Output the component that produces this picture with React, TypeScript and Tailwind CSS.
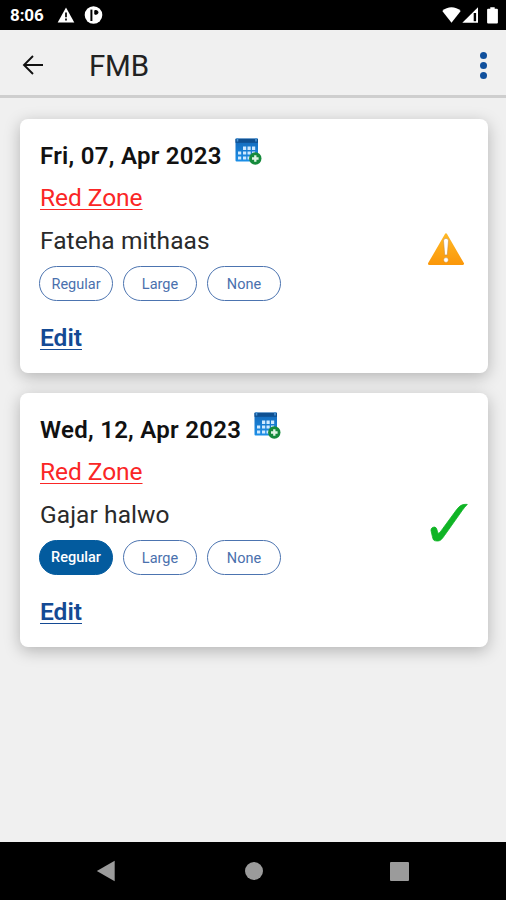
import React from 'react';
import clsx from 'clsx';

type Meal = {
    date: string;
    zone: string;
    dish: string;
    selected?: string;
    confirmed: boolean;
};

const meals: Meal[] = [
    {
        date: "Fri, 07, Apr 2023",
        zone: "Red Zone",
        dish: "Fateha mithaas",
        confirmed: false,
    },
    {
        date: "Wed, 12, Apr 2023",
        zone: "Red Zone",
        dish: "Gajar halwo",
        selected: "Regular",
        confirmed: true,
    },
];

const sizes = ["Regular", "Large", "None"];

function CalendarIcon() {
    return (
        <svg width="27" height="28" viewBox="0 0 27 28">
            <defs>
                <linearGradient id="calendarBlue" x1="0" y1="0" x2="0" y2="1">
                    <stop offset="0" stopColor="#1468b8" />
                    <stop offset="1" stopColor="#1c8fe8" />
                </linearGradient>
            </defs>
            <rect x="0.5" y="0.5" width="22.5" height="23" rx="1" fill="url(#calendarBlue)" />
            <rect x="0.5" y="0.8" width="22.5" height="4" fill="#0f5091" />
            <path d="M2.5 0v3.5M21 0v3.5" stroke="#4a95d6" strokeWidth="1.6" />
            <path
                d="M8 8.5h3.2V12H8zM12.5 8.5h3.2V12h-3.2zM17 8.5h3.2V12H17zM3 13.5h3.2v3H3zM8 13.5h3.2v3H8zM12.5 13.5h3.2v3h-3.2zM17 13.5h3.2v3H17zM3 18.5h3.2v3H3zM8 18.5h3.2v3H8zM12.5 18.5h3.2v3h-3.2z"
                fill="#cfe9ff"
            />
            <circle cx="20.3" cy="20.5" r="6.2" fill="#168a3c" />
            <path d="M20.3 17.2v6.6M17 20.5h6.6" stroke="#e0f4e4" strokeWidth="2.3" />
        </svg>
    );
}

function WarningIcon() {
    return (
        <svg className="mr-[3px] mt-[6px]" width="38" height="34" viewBox="0 0 38 34">
            <defs>
                <linearGradient id="warningOrange" x1="0" y1="0" x2="0" y2="1">
                    <stop offset="0" stopColor="#ffb824" />
                    <stop offset="1" stopColor="#fb980a" />
                </linearGradient>
            </defs>
            <path d="M19 2.6 35.8 31.7H2.2Z" fill="url(#warningOrange)" stroke="url(#warningOrange)" strokeWidth="2.4" strokeLinejoin="round" />
            <path d="M16.5 8.8a2.5 2.5 0 0 1 5 0L20.3 23h-2.6Z" fill="#fff" stroke="#c98d3c" strokeWidth="0.6" />
            <circle cx="19" cy="28" r="2.4" fill="#fff" stroke="#c98d3c" strokeWidth="0.5" />
        </svg>
    );
}

function CheckIcon() {
    return (
        <svg className="mt-[6px]" width="38" height="40" viewBox="0 0 38 40">
            <path
                d="M1 27.5C0.8 25.2 2.8 24 4.6 24.1C6.8 24.3 7 27.2 8 30.4C9.4 30.4 11 28 13 25.2L26.5 6.8C30.3 1.9 32.5 1.2 37.3 1.4C35.5 3.2 33.8 5.2 32 7.8L14.5 32.5C11.2 37.3 10 38.1 6.8 38C3.4 37.9 3.2 36.9 2.4 33.6Z"
                fill="#0fb425"
                stroke="#0fb425"
                strokeWidth="0.8"
            />
        </svg>
    );
}

function StatusBar() {
    return (
        <div className="flex h-[30px] shrink-0 items-center bg-black pl-2.5 pr-2 text-white">
            <span className="w-[47px] pt-[2px] text-[17px] font-bold tracking-[-0.1px]">8:06</span>
            <svg width="18" height="16" viewBox="0 0 18 16">
                <path d="M9 0.5 17.3 15.5H0.7Z" fill="#fff" />
                <path d="M9 5.5v4.7M9 11.6v2" stroke="#000" strokeWidth="1.7" />
            </svg>
            <svg className="ml-[9px]" width="19" height="18" viewBox="0 0 19 18">
                <circle cx="9.5" cy="9" r="8.8" fill="#fff" />
                <path d="M7.4 3.6v11.4" stroke="#000" strokeWidth="2" />
                <path d="M10.8 4.6h1.4a1.6 1.6 0 0 1 0 3.6h-1.4z" fill="#000" stroke="#000" strokeWidth="1" />
            </svg>
            <div className="ml-auto flex items-center">
                <svg width="19" height="16" viewBox="0 0 19 16">
                    <path d="M0.3 4C5.5-1 13.5-1 18.7 4L9.5 15.7Z" fill="#fff" />
                </svg>
                <svg className="ml-[1px]" width="17" height="16" viewBox="0 0 17 16">
                    <path d="M0.3 15.7 16 0.3V15.7Z" fill="#fff" />
                    <path d="M12.9 6v8.2" stroke="#000" strokeWidth="2.4" />
                </svg>
                <svg className="ml-[8px]" width="11" height="17" viewBox="0 0 11 17">
                    <path d="M3.3 0.3h4.4v1.5h2.2q1 0 1 1v12.7q0 1-1 1H1.1q-1 0-1-1V2.8q0-1 1-1h2.2z" fill="#fff" />
                </svg>
            </div>
        </div>
    );
}

function Header() {
    return (
        <header className="flex h-[68px] shrink-0 items-center border-b-[3px] border-[#cecece] pl-[22px] pr-[19px] pt-[5px]">
            <svg width="22" height="20" viewBox="0 0 22 20" fill="none" stroke="#111" strokeWidth="1.9">
                <path d="M21 10H2M11 1 2 10l9 9" />
            </svg>
            <h1 className="ml-[45px] pt-[3px] text-[29.5px] font-normal leading-none tracking-[-0.2px] text-[#222]">FMB</h1>
            <div className="ml-auto flex flex-col gap-[3px] pt-px">
                <span className="size-[7px] rounded-full bg-[#10509c]" />
                <span className="size-[7px] rounded-full bg-[#10509c]" />
                <span className="size-[7px] rounded-full bg-[#10509c]" />
            </div>
        </header>
    );
}

function MealCard({ meal }: { meal: Meal }) {
    return (
        <article className="flex h-[254px] items-center justify-between rounded-[8px] bg-white pl-5 pr-5 shadow-[0_4px_16px_rgba(0,0,0,0.25)]">
            <div className="flex h-full flex-col items-start pt-[15px]">
                <div className="flex h-[42px] items-center">
                    <h2 className="pt-[2px] text-[24px] font-semibold tracking-[0.28px] text-[#111]">{meal.date}</h2>
                    <div className="-mt-[6px] ml-[13px]">
                        <CalendarIcon />
                    </div>
                </div>
                <a className="text-[24.5px] leading-[43px] tracking-[-0.05px] text-[#fa2626] underline decoration-1 underline-offset-[3px]">{meal.zone}</a>
                <p className="text-[24.5px] leading-[43px] tracking-[0.08px] text-[#2a2a2a]">{meal.dish}</p>
                <div className="-ml-px mt-[4px] flex gap-[10px]">
                    {sizes.map((size) => (
                        <button
                            key={size}
                            className={clsx(
                                "h-[35px] w-[74px] rounded-full border text-[14.5px]",
                                size === meal.selected
                                    ? "border-[#035b9e] bg-[#035b9e] font-medium text-white"
                                    : "border-[#4c74b0] pt-[2px] text-[#4a70ad]"
                            )}
                        >
                            {size}
                        </button>
                    ))}
                </div>
                <a className="mt-[18px] text-[24.5px] font-semibold leading-[38px] text-[#144a94] underline decoration-1 underline-offset-[3px]">Edit</a>
            </div>
            {meal.confirmed ? <CheckIcon /> : <WarningIcon />}
        </article>
    );
}

function NavBar() {
    return (
        <nav className="flex h-[58px] shrink-0 items-center bg-black pl-[96px]">
            <svg width="19" height="22" viewBox="0 0 19 22">
                <path d="M0.8 11 18.7 0.7v20.6Z" fill="#9b9b9b" />
            </svg>
            <span className="ml-[130px] size-[18px] rounded-full bg-[#9b9b9b]" />
            <span className="ml-[127px] size-[19px] rounded-[1px] bg-[#9b9b9b]" />
        </nav>
    );
}

export default function App() {
    return (
        <div className="flex h-[900px] w-[506px] flex-col overflow-hidden bg-[#f0f0f0] font-['Roboto',sans-serif]">
            <StatusBar />
            <Header />
            <main className="flex flex-1 flex-col gap-5 pl-5 pr-[18px] pt-[21px]">
                {meals.map((meal) => (
                    <MealCard key={meal.date} meal={meal} />
                ))}
            </main>
            <NavBar />
        </div>
    );
}
